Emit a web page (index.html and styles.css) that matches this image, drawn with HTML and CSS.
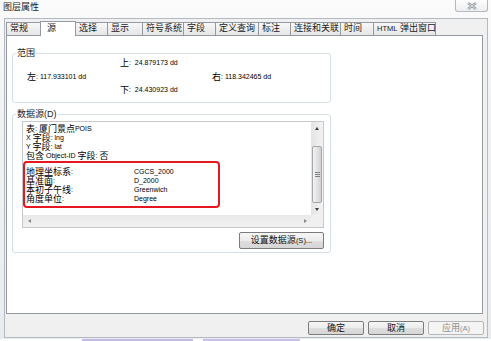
FILE: index.html
```html
<!DOCTYPE html>
<html>
<head>
<meta charset="utf-8">
<title>图层属性</title>
<link rel="stylesheet" href="styles.css">
</head>
<body>
<div class="window">
	<div class="titlebar">
		<span class="title">图层属性</span>
		<div class="closebox">
			<svg width="10" height="8" viewBox="0 0 10 8">
				<path d="M1 1 L9 7 M9 1 L1 7" stroke="#8d939b" stroke-width="2.4" fill="none"/>
				<path d="M1 1 L9 7 M9 1 L1 7" stroke="#f6f7f9" stroke-width="0.8" fill="none"/>
			</svg>
		</div>
	</div>

	<div class="client">
		<div class="tabs">
			<div class="tab">常规</div>
			<div class="tab active">源</div>
			<div class="tab">选择</div>
			<div class="tab">显示</div>
			<div class="tab">符号系统</div>
			<div class="tab">字段</div>
			<div class="tab">定义查询</div>
			<div class="tab">标注</div>
			<div class="tab">连接和关联</div>
			<div class="tab">时间</div>
			<div class="tab"><span class="en">HTML</span> 弹出窗口</div>
		</div>

		<div class="panel">
			<div class="group extent">
				<div class="legend">范围</div>
				<div class="extent-grid">
					<div></div>
					<div class="cell"><span class="zh">上</span>: &nbsp;24.879173 dd</div>
					<div></div>
					<div class="cell"><span class="zh">左</span>: 117.933101 dd</div>
					<div></div>
					<div class="cell"><span class="zh">右</span>: 118.342465 dd</div>
					<div></div>
					<div class="cell"><span class="zh">下</span>: &nbsp;24.430923 dd</div>
					<div></div>
				</div>
			</div>

			<div class="group source">
				<div class="legend">数据源(D)</div>
				<div class="listbox">
					<div class="list-content">
						<div class="line"><span class="zh">表</span>: <span class="zh">厦门景点</span>POIS</div>
						<div class="line">X <span class="zh">字段</span>: lng</div>
						<div class="line">Y <span class="zh">字段</span>: lat</div>
						<div class="line"><span class="zh">包含</span> Object-ID <span class="zh">字段</span>: <span class="zh">否</span></div>
						<div class="highlight">
							<div class="kv"><span class="k"><span class="zh">地理坐标系</span>:</span><span>CGCS_2000</span></div>
							<div class="kv"><span class="k"><span class="zh">基准面</span>:</span><span>D_2000</span></div>
							<div class="kv"><span class="k"><span class="zh">本初子午线</span>:</span><span>Greenwich</span></div>
							<div class="kv"><span class="k"><span class="zh">角度单位</span>:</span><span>Degree</span></div>
						</div>
					</div>
					<div class="vscroll">
						<div class="sb-btn"><span class="arrow-up"></span></div>
						<div class="sb-track">
							<div class="thumb"><span class="grip"></span></div>
						</div>
						<div class="sb-btn"><span class="arrow-down"></span></div>
					</div>
					<div class="hscroll">
						<div class="sb-btn h"><span class="arrow-left"></span></div>
						<div class="sb-btn h"><span class="arrow-right"></span></div>
					</div>
					<div class="corner"></div>
				</div>
				<div class="actions">
					<div class="btn set-src">设置数据源<span class="en">(S)...</span></div>
				</div>
			</div>
		</div>

		<div class="footer">
			<div class="btn">确定</div>
			<div class="btn">取消</div>
			<div class="btn disabled">应用<span class="en">(A)</span></div>
		</div>
	</div>

	<div class="desktop">
		<span class="desk-a"></span>
		<span class="desk-b"></span>
	</div>
</div>
</body>
</html>
```

FILE: styles.css
```css
body {
	margin: 0;
	background: #fff;
	font: 7px "Liberation Sans", "Noto Sans CJK SC", sans-serif;
	color: #000;
}

/* CJK runs inside 7px latin lines: keep them from growing the line box */
.zh {
	font-size: 9px;
	line-height: 0;
	vertical-align: -1px;
}
.en {
	font-size: 7.5px;
}

.window {
	width: 491px;
	height: 341px;
	overflow: hidden;
	display: flex;
	flex-direction: column;
	background: linear-gradient(#fbfbfb, #f1f2f4 30%, #e9ecef);
}

/* title bar */
.titlebar {
	height: 18px;
	flex: none;
	display: flex;
	justify-content: space-between;
	align-items: flex-start;
}
.title {
	margin: 3px 0 0 3px;
	font-size: 9px;
	line-height: 9px;
	color: #1b1b1b;
}
.closebox {
	width: 33px;
	height: 12px;
	margin-right: 3px;
	box-sizing: border-box;
	border: 1px solid #b3b9c1;
	border-top: 0;
	border-radius: 0 0 3px 3px;
	background: linear-gradient(#fdfdfd, #eceef1);
	display: flex;
	align-items: center;
	justify-content: center;
}

/* dialog body */
.client {
	flex: none;
	margin-left: 4px;
	width: 484px;
	height: 320px;
	box-sizing: border-box;
	border: 1px solid #b4bac2;
	background: #f0f0f0;
}

.tabs {
	display: flex;
	align-items: flex-end;
	height: 13px;
	padding: 3px 0 0 1px;
}
.tab {
	height: 13px;
	box-sizing: border-box;
	border: 1px solid #939aa3;
	border-bottom: 0;
	margin-right: -1px;
	padding-left: 3px;
	background: linear-gradient(#f8f8f8, #eeeeee 50%, #e6e6e6);
	font-size: 9px;
	line-height: 11px;
	color: #1a1a1a;
	white-space: nowrap;
}
.tab:nth-child(1) { width: 35px; }
.tab:nth-child(2) { width: 36px; }
.tab:nth-child(3) { width: 33px; }
.tab:nth-child(4) { width: 36px; }
.tab:nth-child(5) { width: 42px; }
.tab:nth-child(6) { width: 33px; }
.tab:nth-child(7) { width: 44px; }
.tab:nth-child(8) { width: 33px; }
.tab:nth-child(9) { width: 51px; }
.tab:nth-child(10) { width: 34px; }
.tab:nth-child(11) { width: 63px; }
.tab.active {
	height: 15px;
	margin-bottom: -1px;
	padding: 1px 0 0 6px;
	background: #fff;
	position: relative;
	z-index: 1;
}

.panel {
	margin-left: 1px;
	width: 477px;
	height: 279px;
	box-sizing: border-box;
	border: 1px solid #939aa3;
	background: #fff;
	padding-top: 17px;
}

/* group boxes: the legend sits on the top border */
.group {
	margin-left: 5px;
	width: 319px;
	box-sizing: border-box;
	border: 1px solid #d5dfe5;
	border-radius: 3px;
}
.legend {
	width: max-content;
	margin: -6px 0 0 3px;
	padding: 0 1px;
	background: #fff;
	font-size: 9px;
	line-height: 10px;
	color: #222;
}
.extent {
	padding-bottom: 8px;
}
.extent-grid {
	display: grid;
	grid-template-columns: 93px 92px auto;
	grid-template-rows: repeat(3, 9px);
	row-gap: 4.5px;
	padding-left: 14px;
}
.cell {
	line-height: 9px;
	white-space: nowrap;
}

.source {
	margin-top: 11px;
	padding-bottom: 3px;
}
.source .legend {
	margin-bottom: 2px;
}

.listbox {
	margin-left: 9px;
	width: 302px;
	height: 107px;
	box-sizing: border-box;
	border: 1px solid #c6c9cc;
	display: grid;
	grid-template-columns: 1fr 12px;
	grid-template-rows: 1fr 12px;
}
.list-content {
	overflow: hidden;
	padding: 1.5px 0 0 3px;
}
.line {
	height: 9px;
	line-height: 9px;
	white-space: nowrap;
}
.highlight {
	margin: 1.5px 0 0 -3px;
	width: 197px;
	box-sizing: border-box;
	border: 2px solid #e5181f;
	border-radius: 4px;
	padding: 4px 0 3px 1px;
}
.kv {
	display: flex;
	height: 9px;
	line-height: 9px;
	white-space: nowrap;
}
.k {
	width: 108px;
	flex: none;
}

/* scroll bars */
.vscroll {
	display: flex;
	flex-direction: column;
	background: linear-gradient(to right, #e4e4e4, #f3f3f3);
}
.sb-btn {
	height: 12px;
	flex: none;
	display: flex;
	align-items: center;
	justify-content: center;
}
.sb-btn.h {
	width: 12px;
}
.sb-track {
	flex: 1;
	padding-top: 12px;
	display: flex;
	flex-direction: column;
}
.thumb {
	flex: 1;
	margin: 0 1px;
	border: 1px solid #a2a7ad;
	border-radius: 2px;
	background: linear-gradient(to right, #f4f4f4, #e2e2e2 50%, #d3d3d3);
	display: flex;
	align-items: center;
	justify-content: center;
}
.grip {
	width: 5px;
	height: 5px;
	background: repeating-linear-gradient(#7d8288 0 1px, transparent 1px 2px);
}
.arrow-up {
	border-left: 2px solid transparent;
	border-right: 2px solid transparent;
	border-bottom: 3px solid #3d3d3d;
}
.arrow-down {
	border-left: 2px solid transparent;
	border-right: 2px solid transparent;
	border-top: 3px solid #3d3d3d;
}
.arrow-left {
	border-top: 2px solid transparent;
	border-bottom: 2px solid transparent;
	border-right: 3px solid #8a8a8a;
}
.arrow-right {
	border-top: 2px solid transparent;
	border-bottom: 2px solid transparent;
	border-left: 3px solid #8a8a8a;
}
.hscroll {
	display: flex;
	justify-content: space-between;
	background: linear-gradient(#e8e8e8, #f2f2f2);
}
.corner {
	background: #f0f0f0;
}

/* buttons */
.btn {
	width: 56px;
	height: 14px;
	box-sizing: border-box;
	border: 1px solid #7c7c7c;
	border-radius: 2px;
	background: linear-gradient(#f6f6f6, #ececec 50%, #dedede 51%, #d6d6d6);
	font-size: 9px;
	line-height: 12px;
	text-align: center;
	color: #111;
}
.btn.disabled {
	border-color: #b5b9bc;
	background: #f4f4f4;
	color: #8e8e8e;
}
.actions {
	display: flex;
	justify-content: flex-end;
	margin: 4px 0 0 9px;
	width: 302px;
}
.set-src {
	width: 85px;
	height: 17px;
	line-height: 15px;
}

.footer {
	display: flex;
	justify-content: flex-end;
	gap: 4px;
	padding: 7px 3px 0 0;
}

/* desktop peeking below the window */
.desktop {
	flex: none;
	height: 2px;
	margin-top: 1px;
	padding-left: 82px;
	display: flex;
	gap: 10px;
	background: #fff;
}
.desk-a {
	width: 111px;
	background: #c4bae6;
}
.desk-b {
	width: 97px;
	background: #c9bfe9;
}
```
